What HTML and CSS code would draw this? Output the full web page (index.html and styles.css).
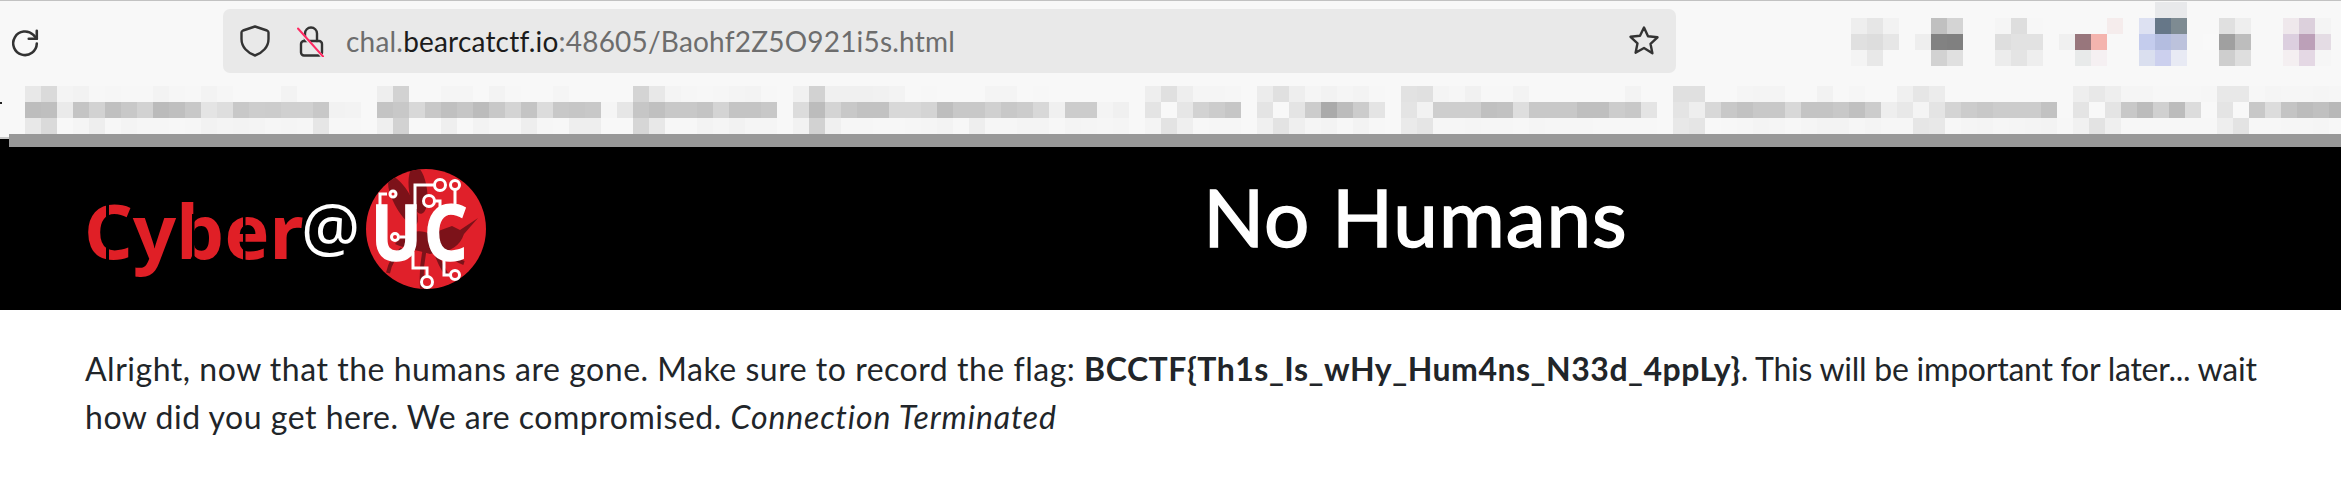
FILE: index.html
```html
<!DOCTYPE html>
<html lang="en">
<head>
<meta charset="utf-8">
<title>No Humans</title>
<link rel="stylesheet" href="styles.css">
</head>
<body>
<div class="chrome">
  <div class="toolbar">
    <svg class="reload" viewBox="0 0 28 28" aria-hidden="true">
      <path class="ink" d="M25 14.5a11 11 0 1 1-3.2-8L25 10"/>
      <path class="ink" d="M25 2.5V10h-7.5"/>
    </svg>
    <div class="urlbar">
      <svg class="shield" viewBox="0 0 30 32" aria-hidden="true">
        <path class="ink" d="M15 1.5 27 5.500c1 .4 1.500 1 1.500 2V14c0 8-6 14-13.500 16.500C7.500 28 1.500 22 1.500 14V7.500c0-1 .5-1.600 1.500-2z"/>
      </svg>
      <svg class="lock" viewBox="0 0 28 32" aria-hidden="true">
        <path class="ink" d="M8 16V8.500a6 6 0 0 1 12 0V16"/>
        <rect class="ink" x="4" y="16" width="21" height="14.500" rx="3"/>
        <path class="slash-gap" d="M1 5l25 27"/>
        <path class="slash" d="M1 3.500l25 28"/>
      </svg>
      <span class="url">chal.<b class="domain">bearcatctf.io</b>:48605/Baohf2Z5O921i5s.html</span>
      <svg class="star" viewBox="0 0 32 32" aria-hidden="true">
        <path class="ink" d="M16 2.500l4 8.700 9.500 1.100-7 6.500 1.900 9.400L16 23l-8.400 4.700 1.900-9.400-7-6.500 9.500-1.100z"/>
      </svg>
    </div>
    <div class="mosaic ext-mosaic" id="ext"></div>
  </div>
  <div class="mosaic bookmarks" id="bookmarks"></div>
  <span class="speck"></span>
</div>
<div class="strip"><span class="strip-edge"></span><span class="strip-bar"></span></div>
<header class="banner">
  <svg class="logo" viewBox="80 160 410 130" role="img" aria-label="Cyber@UC">
    <defs><clipPath id="disc"><circle cx="426" cy="225" r="60"/></clipPath></defs>
    <text class="logo-cyber" x="84" y="255">Cyber</text>
    <g class="stencil">
      <rect x="106" y="196" width="3" height="64"/>
      <rect x="192" y="210" width="2.500" height="48"/>
      <rect x="243" y="210" width="2.500" height="48"/>
    </g>
    <text class="logo-at" x="301" y="247">@</text>
    <circle class="disc" cx="426" cy="225" r="60"/>
    <g clip-path="url(#disc)" class="bug">
      <ellipse cx="418" cy="186" rx="9" ry="24" transform="rotate(-8 418 186)"/>
      <ellipse cx="403" cy="197" rx="9" ry="27" transform="rotate(-28 403 197)"/>
      <path d="M395 240c10-12 24-16 35-10l22-8 8 4 18-12-14 16c-4 12-14 18-26 18l-8 2c-14-4-26-6-35-10z"/>
      <path class="bug-leg" d="M402 245c-8 8-12 14-14 24M425 245c-3 12-4 24-3 40M435 245c3 12 8 20 12 26M450 250c4 4 8 7 14 9"/>
    </g>
    <g class="trace">
      <path d="M434 181h-19v24M455 186v18M435 197h5v12M387 190h-7v16M450 271h-6v-20M427 272v-8h-14v-16"/>
      <circle cx="440" cy="181" r="5.500"/>
      <circle cx="455" cy="181" r="4.500"/>
      <circle cx="429" cy="197" r="5.500"/>
      <circle cx="393" cy="190" r="3"/>
      <circle cx="455" cy="271" r="4.500"/>
      <circle cx="427" cy="278" r="5.500"/>
    </g>
    <text class="logo-uc" transform="translate(371 256) scale(.86 1)">UC</text>
    <g class="trace">
      <path d="M400 233h9"/>
      <circle cx="395" cy="233" r="3.500"/>
    </g>
  </svg>
  <h1 class="title">No Humans</h1>
</header>
<main class="content">
  <p class="message">Alright, now that the humans are gone. Make sure to record the flag: <strong>BCCTF{Th1s_Is_wHy_Hum4ns_N33d_4ppLy}</strong><span class="tail">. This will be important for later... wait</span> how did you get here. We are compromised. <em>Connection Terminated</em></p>
</main>
<script src="mosaic.js"></script>
</body>
</html>
```
FILE: styles.css
```css
* { box-sizing: border-box; }
html, body { margin: 0; padding: 0; }
body {
  width: 2341px;
  height: 491px;
  overflow: hidden;
  background: #fff;
  color: #212529;
  font-family: Lato, "Noto Sans", sans-serif;
}
.chrome {
  position: relative;
  height: 134px;
  background: #f8f8f8;
  border-top: 1px solid #c2c2c2;
}
.toolbar {
  display: flex;
  align-items: flex-start;
  height: 85px;
  padding-left: 10px;
}
.ink, .slash, .slash-gap {
  fill: none;
  stroke: #333;
  stroke-width: 2.4;
  stroke-linejoin: round;
  stroke-linecap: round;
}
.reload { width: 30px; height: 30px; margin-top: 27px; margin-right: 183px; flex: none; }
.urlbar {
  display: flex;
  align-items: center;
  width: 1453px;
  height: 64px;
  margin-top: 8px;
  padding-left: 17px;
  padding-right: 16px;
  background: #e9e9e9;
  border-radius: 7px;
  flex: none;
}
.shield { width: 30px; height: 32px; flex: none; margin-right: 27px; }
.lock { width: 28px; height: 32px; flex: none; margin-right: 21px; }
.slash-gap { stroke: #e9e9e9; stroke-width: 3; }
.slash { stroke: #ff2a62; stroke-width: 2; }
.url { font-size: 28px; color: #6d6d6d; white-space: nowrap; flex: 1; letter-spacing: 0.2px; }
.domain { font-weight: 400; color: #1c1c1c; }
.star { width: 32px; height: 32px; flex: none; }
.mosaic { display: grid; grid-auto-rows: 16px; }
.ext-mosaic { grid-template-columns: repeat(31, 16px); margin-left: 175px; margin-top: 1px; flex: none; }
.bookmarks { grid-template-columns: repeat(145, 16px); margin-left: 25px; }
.cell { display: block; }
.speck { position: absolute; left: 0; top: 101px; width: 2px; height: 2px; background: #222; }
.strip { display: flex; height: 13px; }
.strip-edge {
  width: 9px;
  background: linear-gradient(#f8f8f8 0 3px, #c8c8c8 3px 5px, #000 5px);
}
.strip-bar { flex: 1; background: #989898; }
.banner {
  display: flex;
  align-items: center;
  height: 163px;
  padding-left: 80px;
  background: #000;
}
.logo { width: 410px; height: 130px; flex: none; }
.logo-cyber { font-family: "Noto Sans", sans-serif; font-weight: 700; font-size: 76px; fill: #e01f26; }
.stencil rect { fill: #000; }
.logo-at { font-family: "Open Sans", sans-serif; font-weight: 400; font-size: 66px; fill: #fff; }
.disc { fill: #e0202a; }
.bug { fill: #7c1219; }
.bug-leg { fill: none; stroke: #7c1219; stroke-width: 4; }
.logo-uc {
  font-family: "Noto Sans", sans-serif;
  font-weight: 700;
  font-size: 78px;
  fill: #fff;
  stroke: #fff;
  stroke-width: 1.5px;
  letter-spacing: 3px;
}
.trace path { fill: none; stroke: #fff; stroke-width: 3; }
.trace circle { fill: #e0202a; stroke: #fff; stroke-width: 3; }
.title {
  flex: 1;
  margin: 0 0 26px 0;
  text-align: center;
  color: #fff;
  font-size: 80px;
  font-weight: 400;
  line-height: 96px;
  letter-spacing: 1px;
  -webkit-text-stroke: 1.5px #fff;
}
.content { padding: 35px 30px 0 85px; }
.message { margin: 0; font-size: 32px; line-height: 48px; letter-spacing: 0.52px; }
.message strong { font-weight: 700; }
.message em { letter-spacing: 0.87px; }
.tail { letter-spacing: -0.24px; }
```
FILE: mosaic.js
```js
var BOOKMARK_ROWS = [
  "e8 da f4 f2 f7 f6 f7 f7 f3 f6 f7 f3 f6 f8 f8 f8 f3 f8 f8 f8 f8 f8 ee d2 f8 f8 f5 f5 f8 f3 f7 f8 f8 f5 f8 f8 f8 f8 d4 e8 f4 f6 f7 f6 f4 f3 f7 f8 f1 d2 f0 f0 f0 f1 f3 f8 f7 f8 f8 f8 f4 f4 f8 f7 f8 f8 f8 f8 f8 f8 ee e0 ee f5 f5 f6 f8 ec e0 ee f5 f2 f5 f3 f7 f8 e2 e0 f4 f6 f1 f7 f7 f3 f8 f8 f8 f8 f8 f8 f3 f8 f8 e0 e0 f8 f8 f5 f4 f4 f8 f8 f2 f8 f6 f8 f8 f0 e6 ec f8 f8 f8 f8 f8 f8 f8 f8 ee e8 ee f5 f5 f7 f7 f7 f6 e8 e8 f7 f5 f6 f6 f5 f6",
  "bd bf ea c4 d2 c0 c8 d2 bb bf c8 e4 de c8 cd cc d0 d0 c8 f2 f3 f8 c4 c8 d8 c8 c0 c6 bc c8 d4 c4 dc c8 c6 c8 f5 e6 c6 c0 c8 c8 c4 d4 c4 c4 c8 f8 dc bc d4 c8 c2 c2 d8 d8 d4 be c8 c8 d0 c8 cc d8 f0 cc cc f4 f0 f8 e4 f8 e6 d2 cc c6 f8 e4 f8 e4 cc aa bc cc e4 f8 e4 f2 ce ce ce c0 c2 de c8 c8 c8 bf bf cc c8 e4 f8 e4 ee d8 c8 c2 c8 c8 d8 c4 c4 c8 c0 cc ee e8 f4 e4 d4 cc c8 cc cc cc c2 f8 e4 f8 e4 c8 bc d0 bc dc f8 e4 f8 c8 dc c4 bc c0 b8",
  "e8 da f8 f5 ee f7 f4 f6 f6 f7 f6 f2 f4 f3 f4 f6 f5 f6 e6 f7 f7 f8 ef d2 f8 f8 ef f8 f3 f6 f6 ee f6 f7 ee ee f8 f8 d6 e8 f7 f7 f3 f5 f2 f5 f5 f8 f2 d2 f0 f6 f6 f7 f7 f6 f5 f3 f7 ee f6 f6 f4 f4 f7 f4 f5 f6 f5 f8 f4 e3 ef f7 f6 f6 f8 f0 e3 ef f5 f3 f7 f3 f7 f8 ea e5 f6 f6 f5 f6 f6 f7 f5 f6 f6 f6 f7 f7 f7 f7 f8 e8 e5 f8 f7 f6 f4 f5 f7 f5 f3 f3 f6 f4 f6 f6 e6 e8 f7 f5 f4 f6 f5 f4 f3 f7 f1 e3 ef f7 f7 f7 f7 f7 f7 ee e3 f7 f7 f6 f6 f5 f7"
];
var EXTENSION_ROWS = [
  "-- -- -- -- -- -- -- -- -- -- -- -- -- -- -- -- -- -- -- e8e9eb e8e9eb -- -- -- -- -- -- -- -- -- --",
  "ee e6 f2 -- -- c0 d4 -- -- f5 de f7 -- -- -- -- f5ecec -- dde1f2 667788 7e8b92 -- -- e0 ee -- -- efe8ec dcd0dc f4 --",
  "e0 dd e6 -- ee 82 80 -- -- de e2 e2 -- f0 98767c f4b4ae -- -- c4cced b4bde0 bcc2dc -- f9 a0 bd -- -- dccfdf bca0b8 e4dce4 --",
  "f4 e8 -- -- -- d2 e0 -- -- ec e4 ee -- -- e8eaea f5f0f2 -- -- dadfef ccd0ee e8eaf4 -- -- ce de -- -- f4eff1 e4d8e4 f6 --"
];
function fillMosaic(id, rows) {
  var host = document.getElementById(id);
  rows.forEach(function (row) {
    row.split(" ").forEach(function (v) {
      var cell = document.createElement("span");
      cell.className = "cell";
      if (v !== "--") {
        cell.style.background = "#" + (v.length === 2 ? v + v + v : v);
      }
      host.appendChild(cell);
    });
  });
}
fillMosaic("bookmarks", BOOKMARK_ROWS);
fillMosaic("ext", EXTENSION_ROWS);
```
